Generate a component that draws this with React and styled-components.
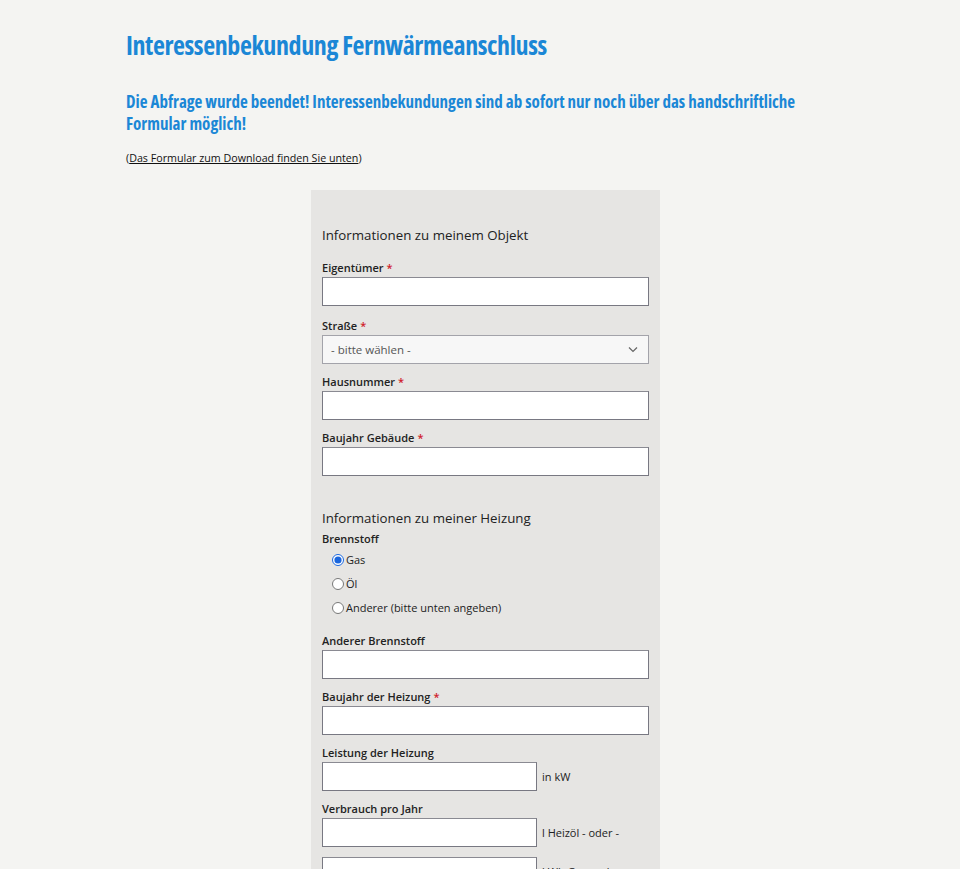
import React from "react";
import styled, { createGlobalStyle } from "styled-components";

const GlobalStyle = createGlobalStyle`
  html, body { margin: 0; padding: 0; }
  body {
    background: #f4f4f2;
    font-family: "Open Sans", "Noto Sans", sans-serif;
    color: #1a1a1a;
  }
`;

const Page = styled.main`
  width: 719px;
  margin: 0 0 0 126px;
  padding-top: 28px;
`;

const Title = styled.h1`
  margin: 0;
  font-family: "Open Sans", "Noto Sans", sans-serif;
  font-stretch: 75%;
  font-weight: 700;
  font-size: 26px;
  letter-spacing: -0.4px;
  line-height: 34px;
  color: #1b87d6;
`;

const Notice = styled.h2`
  margin: 29px 0 0;
  font-family: "Open Sans", "Noto Sans", sans-serif;
  font-stretch: 75%;
  font-weight: 700;
  font-size: 17px;
  line-height: 22px;
  color: #1b87d6;
`;

const Note = styled.p`
  margin: 15px 0 0;
  font-size: 10.7px;
  line-height: 16px;
  font-weight: 500;
  color: #111;
  a { color: #111; text-decoration: underline; }
`;

const FormPanel = styled.form`
  width: 349px;
  box-sizing: border-box;
  margin: 24px 0 0 185px;
  background: #e6e5e3;
  padding: 35px 11px 40px;
`;

const SectionTitle = styled.h3`
  margin: 0 0 ${(p) => p.$after || 10}px;
  font-weight: 400;
  font-size: 13.3px;
  line-height: 20px;
  color: #222;
`;

const Spacer = styled.div`
  height: ${(p) => p.$h}px;
`;

const Field = styled.div`
  display: flex;
  flex-direction: column;
  padding-top: ${(p) => p.$top || 0}px;
  margin-bottom: 10px;
`;

const Label = styled.label`
  font-size: 11px;
  font-weight: 600;
  line-height: 16px;
  margin-bottom: 1px;
  color: #222;
`;

const Required = styled.span`
  color: #d0202a;
  margin-left: 3px;
`;

const TextInput = styled.input`
  box-sizing: border-box;
  width: ${(p) => p.$w || 327}px;
  height: 29px;
  border: 1px solid #787882;
  border-top-color: #8a8a92;
  background: #fff;
  margin: 0;
  padding: 0 6px;
  font: inherit;
`;

const SelectWrap = styled.div`
  position: relative;
  width: 327px;
  height: 29px;
  svg {
    position: absolute;
    right: 11px;
    top: 11px;
    pointer-events: none;
  }
`;

const Select = styled.select`
  appearance: none;
  box-sizing: border-box;
  width: 100%;
  height: 29px;
  border: 1px solid #a3a3aa;
  background: #f7f7f7;
  color: #555;
  font-family: inherit;
  font-size: 11.5px;
  padding: 0 8px;
  margin: 0;
`;

const RadioList = styled.div`
  display: flex;
  flex-direction: column;
  gap: 6px;
  padding-left: 10px;
  margin-top: 4px;
  margin-bottom: 16px;
`;

const RadioOption = styled.label`
  display: flex;
  align-items: center;
  font-size: 11px;
  line-height: 18px;
  color: #222;
  input {
    margin: 0 2px 0 0;
    width: 12px;
    height: 12px;
    accent-color: #1a66dd;
  }
`;

const InlineRow = styled.div`
  display: flex;
  align-items: center;
  gap: 5px;
`;

const Unit = styled.span`
  font-size: 11px;
  color: #222;
`;

function Chevron() {
  return (
    <svg width="10" height="7" viewBox="0 0 10 7" fill="none">
      <path d="M1 1.5 L5 5.5 L9 1.5" stroke="#666" strokeWidth="1.2" />
    </svg>
  );
}

function TextField({ label, required, width, unit }) {
  return (
    <Field>
      <Label>
        {label}
        {required && <Required>*</Required>}
      </Label>
      {unit ? (
        <InlineRow>
          <TextInput $w={width} />
          <Unit>{unit}</Unit>
        </InlineRow>
      ) : (
        <TextInput $w={width} />
      )}
    </Field>
  );
}

export default function App() {
  return (
    <>
      <GlobalStyle />
      <Page>
        <Title>Interessenbekundung Fernwärmeanschluss</Title>
        <Notice>
          Die Abfrage wurde beendet! Interessenbekundungen sind ab sofort nur noch über das handschriftliche
          <br />
          Formular möglich!
        </Notice>
        <Note>
          (<a href="#download">Das Formular zum Download finden Sie unten</a>)
        </Note>
        <FormPanel onSubmit={(e) => e.preventDefault()}>
          <SectionTitle $after={15}>Informationen zu meinem Objekt</SectionTitle>
          <TextField label="Eigentümer" required />
          <Field $top={2}>
            <Label>
              Straße<Required>*</Required>
            </Label>
            <SelectWrap>
              <Select defaultValue="">
                <option value="">- bitte wählen -</option>
              </Select>
              <Chevron />
            </SelectWrap>
          </Field>
          <TextField label="Hausnummer" required />
          <TextField label="Baujahr Gebäude" required />
          <Spacer $h={22} />
          <SectionTitle $after={3}>Informationen zu meiner Heizung</SectionTitle>
          <Label as="div">Brennstoff</Label>
          <RadioList>
            <RadioOption>
              <input type="radio" name="brennstoff" defaultChecked />
              Gas
            </RadioOption>
            <RadioOption>
              <input type="radio" name="brennstoff" />
              Öl
            </RadioOption>
            <RadioOption>
              <input type="radio" name="brennstoff" />
              Anderer (bitte unten angeben)
            </RadioOption>
          </RadioList>
          <TextField label="Anderer Brennstoff" />
          <TextField label="Baujahr der Heizung" required />
          <TextField label="Leistung der Heizung" width={215} unit="in kW" />
          <TextField label="Verbrauch pro Jahr" width={215} unit="l Heizöl - oder -" />
          <InlineRow>
            <TextInput $w={215} />
            <Unit>kWh Gas - oder -</Unit>
          </InlineRow>
        </FormPanel>
      </Page>
    </>
  );
}
